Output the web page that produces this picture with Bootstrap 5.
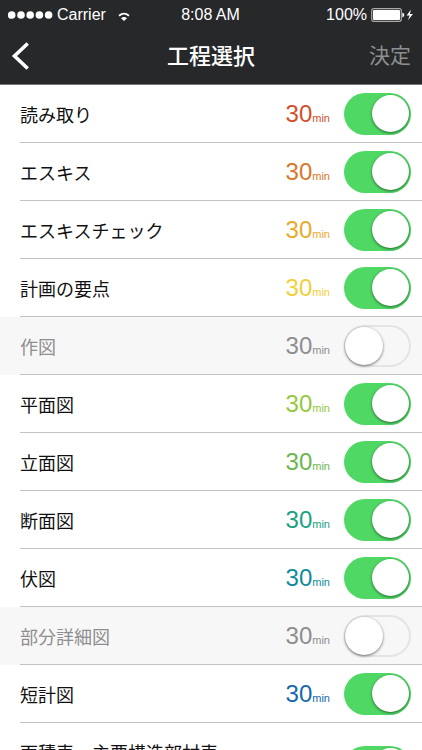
<!DOCTYPE html>
<html lang="ja">
<head>
<meta charset="utf-8">
<meta name="viewport" content="width=device-width, initial-scale=1">
<title>工程選択</title>
<link rel="stylesheet" href="https://cdn.jsdelivr.net/npm/bootstrap@5.3.0/dist/css/bootstrap.min.css">
<style>
  body { font-family: "Liberation Sans", "Noto Sans CJK JP", sans-serif; color: #111; background: #fff; }
  .app-top { background: #27282a; color: #fff; border-bottom: 1px solid #77757b; }
  .status-bar { height: 28px; font-size: 16px; line-height: 26px; padding: 2px 9px 0 8px; }
  .status-side { flex: 1 1 0; }
  .title-bar { height: 56px; padding: 0 11px; }
  .title-bar button { line-height: 32px; font-size: 21px; color: #8e8e90; font-family: "Noto Sans CJK JP", sans-serif; }
  .title-bar h1, .title-bar .done { padding-bottom: 4px; }
  .title-bar h1 { font-size: 22px; line-height: 32px; font-weight: 500; font-family: "Noto Sans CJK JP", sans-serif; }
  .step-list { overflow-y: auto; scrollbar-width: none; }
  .step { padding-left: 20px; }
  .step-inner { height: 58px; border-bottom: 1px solid #c2c1c6; padding-right: 11px; }
  .step-tall .step-inner { height: 88px; }
  .step-tall label { align-self: flex-start; padding-top: 16px; }
  .step label { font-family: "Noto Sans CJK JP", sans-serif; font-size: 18px; line-height: 26px; }
  .step-off { background: #f7f7f7; color: #8e8e90; }
  .minutes { font-size: 24px; line-height: 32px; margin-right: 14px; padding-top: 4px; }
  .minutes small { font-size: 11px; }
  .step .form-check-input {
    width: 67px; height: 42px; margin: 0; padding: 2px; border: 0; border-radius: 21px;
    display: flex; align-items: center; flex: none; background: #4fd964;
    justify-content: flex-end;
  }
  .step .form-check-input::before {
    content: ""; width: 37px; height: 37px; border-radius: 50%; background: #fff;
    box-shadow: 0 1px 3px rgba(0,0,0,.55);
  }
  .step .form-check-input:not(:checked) {
    background: transparent; justify-content: flex-start; padding: 1px;
    box-shadow: inset 0 0 0 2px #e4e4e5;
  }
  .step .form-check-input:not(:checked)::before { width: 38px; height: 38px; }
  .c1 { color: #d2502c; } .c2 { color: #d9772b; } .c3 { color: #eba92b; } .c4 { color: #f3cf3a; }
  .c5 { color: #95c83d; } .c6 { color: #6cb650; } .c7 { color: #1ba184; } .c8 { color: #0f8c9c; } .c9 { color: #1668b0; }
</style>
<script src="https://cdn.jsdelivr.net/npm/bootstrap@5.3.0/dist/js/bootstrap.bundle.min.js"></script>
</head>
<body class="vh-100 d-flex flex-column overflow-hidden">
<header class="app-top flex-shrink-0">
  <div class="status-bar d-flex align-items-center">
    <div class="status-side d-flex align-items-center">
      <svg width="45" height="10" viewBox="0 0 45 10" fill="#fff" aria-hidden="true"><circle cx="3.7" cy="5" r="3.8"/><circle cx="13" cy="5" r="3.8"/><circle cx="22.2" cy="5" r="3.8"/><circle cx="31.4" cy="5" r="3.8"/><circle cx="40.6" cy="5" r="3.8"/></svg>
      <span class="ms-1">Carrier</span>
      <svg class="ms-2 mt-1" width="20" height="10" viewBox="0 0 20 10" fill="none" aria-hidden="true"><path d="M5 3.8Q10-.6 15 3.8" stroke="#fff" stroke-width="1.8"/><path d="M7 6.2Q10 3.6 13 6.2L10 9Z" fill="#fff"/></svg>
    </div>
    <span>8:08 AM</span>
    <div class="status-side d-flex align-items-center justify-content-end">
      <span>100%</span>
      <svg class="ms-1" width="42" height="14" viewBox="0 0 42 14" aria-hidden="true"><rect x=".7" y=".7" width="29.6" height="12.6" rx="2" fill="none" stroke="#aaa" stroke-width="1.2"/><rect x="2" y="2" width="27" height="10" rx="1" fill="#fff"/><path d="M31.3 4.6Q33.3 5.3 33.3 7T31.3 9.4Z" fill="#fff"/><path d="M40 1.5L35.6 7.5H38.6L37 12.3L41.9 6H38.8Z" fill="#fff"/></svg>
    </div>
  </div>
  <div class="title-bar d-flex align-items-center">
    <div class="status-side d-flex">
      <button class="btn p-0 border-0 d-flex" type="button" aria-label="戻る"><svg width="20" height="28" viewBox="0 0 20 28" fill="none" stroke="#fff" stroke-width="3.6"><path d="M16.7 1.5L3.5 14L16.7 26.5"/></svg></button>
    </div>
    <h1 class="m-0">工程選択</h1>
    <div class="status-side text-end done"><button class="btn p-0 border-0" type="button">決定</button></div>
  </div>
</header>
<main class="step-list flex-grow-1">
  <ul class="list-unstyled m-0">
    <li class="step"><div class="step-inner d-flex align-items-center"><label class="flex-grow-1" for="s1">読み取り</label><span class="minutes c1">30<small>min</small></span><input class="form-check-input" type="checkbox" role="switch" id="s1" checked></div></li>
    <li class="step"><div class="step-inner d-flex align-items-center"><label class="flex-grow-1" for="s2">エスキス</label><span class="minutes c2">30<small>min</small></span><input class="form-check-input" type="checkbox" role="switch" id="s2" checked></div></li>
    <li class="step"><div class="step-inner d-flex align-items-center"><label class="flex-grow-1" for="s3">エスキスチェック</label><span class="minutes c3">30<small>min</small></span><input class="form-check-input" type="checkbox" role="switch" id="s3" checked></div></li>
    <li class="step"><div class="step-inner d-flex align-items-center"><label class="flex-grow-1" for="s4">計画の要点</label><span class="minutes c4">30<small>min</small></span><input class="form-check-input" type="checkbox" role="switch" id="s4" checked></div></li>
    <li class="step step-off"><div class="step-inner d-flex align-items-center"><label class="flex-grow-1" for="s5">作図</label><span class="minutes">30<small>min</small></span><input class="form-check-input" type="checkbox" role="switch" id="s5"></div></li>
    <li class="step"><div class="step-inner d-flex align-items-center"><label class="flex-grow-1" for="s6">平面図</label><span class="minutes c5">30<small>min</small></span><input class="form-check-input" type="checkbox" role="switch" id="s6" checked></div></li>
    <li class="step"><div class="step-inner d-flex align-items-center"><label class="flex-grow-1" for="s7">立面図</label><span class="minutes c6">30<small>min</small></span><input class="form-check-input" type="checkbox" role="switch" id="s7" checked></div></li>
    <li class="step"><div class="step-inner d-flex align-items-center"><label class="flex-grow-1" for="s8">断面図</label><span class="minutes c7">30<small>min</small></span><input class="form-check-input" type="checkbox" role="switch" id="s8" checked></div></li>
    <li class="step"><div class="step-inner d-flex align-items-center"><label class="flex-grow-1" for="s9">伏図</label><span class="minutes c8">30<small>min</small></span><input class="form-check-input" type="checkbox" role="switch" id="s9" checked></div></li>
    <li class="step step-off"><div class="step-inner d-flex align-items-center"><label class="flex-grow-1" for="s10">部分詳細図</label><span class="minutes">30<small>min</small></span><input class="form-check-input" type="checkbox" role="switch" id="s10"></div></li>
    <li class="step"><div class="step-inner d-flex align-items-center"><label class="flex-grow-1" for="s11">短計図</label><span class="minutes c9">30<small>min</small></span><input class="form-check-input" type="checkbox" role="switch" id="s11" checked></div></li>
    <li class="step step-tall"><div class="step-inner d-flex align-items-center"><label class="flex-grow-1" for="s12">面積表、主要構造部材表</label><span class="minutes c9">30<small>min</small></span><input class="form-check-input" type="checkbox" role="switch" id="s12" checked></div></li>
  </ul>
</main>
</body>
</html>
